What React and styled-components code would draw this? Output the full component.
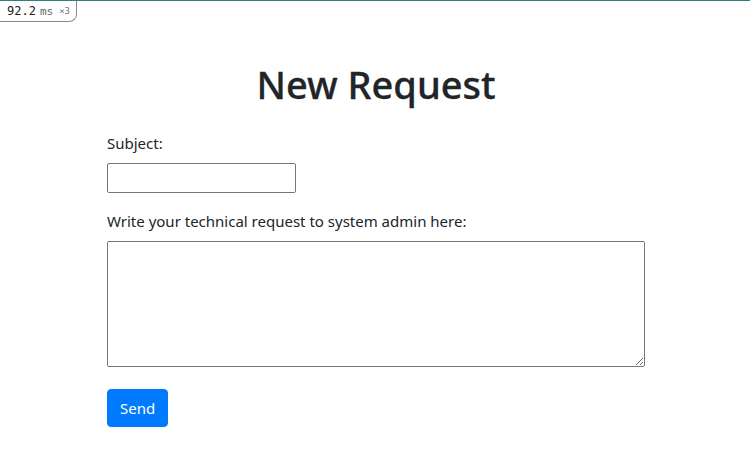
import React, { useState } from 'react';
import styled, { createGlobalStyle } from 'styled-components';

const GlobalStyle = createGlobalStyle`
  html, body {
    margin: 0;
    padding: 0;
    background: #fff;
  }
  body {
    font-family: "Noto Sans", "Open Sans", sans-serif;
    color: #212529;
    border-top: 1px solid #2f7f80;
  }
`;

function App() {
  const [subject, setSubject] = useState('');
  const [body, setBody] = useState('');

  return (
    <>
      <GlobalStyle />
      <Timer>
        <TimerValue>92.2</TimerValue>
        <TimerUnit>ms</TimerUnit>
        <TimerCount>×3</TimerCount>
      </Timer>
      <Page>
        <Heading>New Request</Heading>
        <Form onSubmit={(e) => e.preventDefault()}>
          <Label htmlFor="subject">Subject:</Label>
          <SubjectInput
            id="subject"
            type="text"
            value={subject}
            onChange={(e) => setSubject(e.target.value)}
          />
          <Label htmlFor="body" $top={16}>Write your technical request to system admin here:</Label>
          <BodyArea
            id="body"
            value={body}
            onChange={(e) => setBody(e.target.value)}
          />
          <SendButton type="submit">Send</SendButton>
        </Form>
      </Page>
    </>
  );
}

const blue = '#007bff';

const Timer = styled.div`
  position: absolute;
  top: 1px;
  left: 0;
  height: 20px;
  padding: 0 6px 0 7px;
  display: flex;
  align-items: center;
  gap: 4px;
  background: #fff;
  border: 1px solid #8a8a8a;
  border-top: none;
  border-left: none;
  border-bottom-right-radius: 8px;
  font-family: "DejaVu Sans Mono", monospace;
`;

const TimerValue = styled.span`
  font-size: 12px;
  color: #222;
`;

const TimerUnit = styled.span`
  font-size: 11px;
  color: #666;
  margin-right: 2px;
`;

const TimerCount = styled.span`
  font-size: 9px;
  color: #777;
`;

const Page = styled.main`
  width: 538px;
  margin-left: calc(50% - 268px);
  padding-top: 59px;
`;

const Heading = styled.h1`
  margin: 0 0 23px;
  font-size: 38px;
  font-weight: 500;
  line-height: 48px;
  text-align: center;
  -webkit-text-stroke: 0.3px #212529;
`;

const Form = styled.form`
  display: flex;
  flex-direction: column;
  align-items: flex-start;
`;

const Label = styled.label`
  margin-top: ${(p) => p.$top || 0}px;
  margin-bottom: 8px;
  font-size: 15px;
  line-height: 24px;
`;

const SubjectInput = styled.input`
  box-sizing: border-box;
  width: 189px;
  height: 30px;
  margin: 0;
  padding: 1px 2px;
  border: 1px solid #767676;
  border-radius: 2px;
  font: inherit;
  font-size: 15px;
`;

const BodyArea = styled.textarea`
  box-sizing: border-box;
  width: 538px;
  height: 126px;
  margin: 0;
  padding: 2px;
  border: 1px solid #767676;
  border-radius: 2px;
  font: inherit;
  font-size: 15px;
`;

const SendButton = styled.button`
  margin-top: 22px;
  height: 38px;
  padding: 0 12px;
  border: 1px solid ${blue};
  border-radius: 4px;
  background: ${blue};
  color: #fff;
  font-family: inherit;
  font-size: 15px;
  line-height: 24px;
  cursor: pointer;
`;

export default App;
